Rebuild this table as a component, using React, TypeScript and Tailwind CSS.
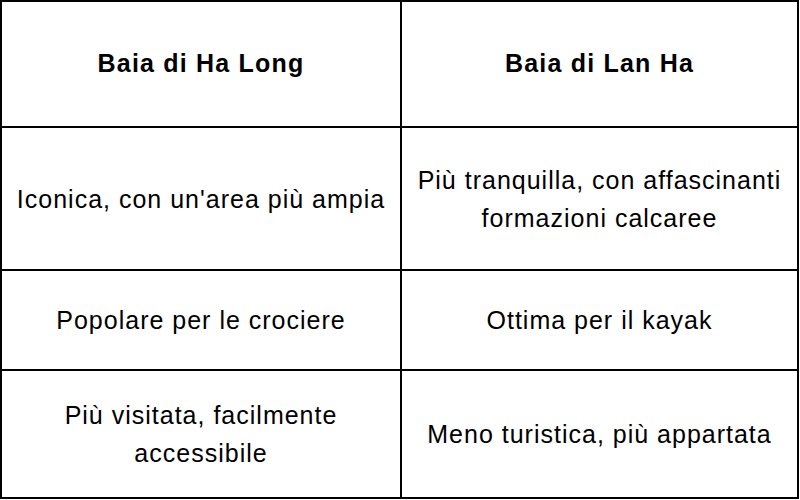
const rows = [
  ["Iconica, con un'area più ampia", "Più tranquilla, con affascinanti formazioni calcaree"],
  ["Popolare per le crociere", "Ottima per il kayak"],
  ["Più visitata, facilmente accessibile", "Meno turistica, più appartata"],
];

export default function App() {
  return (
    <div className="w-[800px] h-[500px] bg-white font-['Liberation_Sans',Arial,sans-serif] text-black">
      <div className="w-[799px] h-[499px] bg-black p-[2px] grid grid-cols-[398px_395px] grid-rows-[124px_141px_98px_126px] gap-[2px]">
        <div className="bg-white flex items-center justify-center px-3 text-center text-[25px] tracking-[1.2px] font-bold">
          Baia di Ha Long
        </div>
        <div className="bg-white flex items-center justify-center px-3 text-center text-[25px] tracking-[1.2px] font-bold">
          Baia di Lan Ha
        </div>
        {rows.map((row, i) =>
          row.map((cell, j) => (
            <div
              key={`${i}-${j}`}
              className="bg-white flex items-center justify-center px-[8px] text-center text-[25px] tracking-[1px] leading-[38px]"
            >
              {cell}
            </div>
          ))
        )}
      </div>
    </div>
  );
}
